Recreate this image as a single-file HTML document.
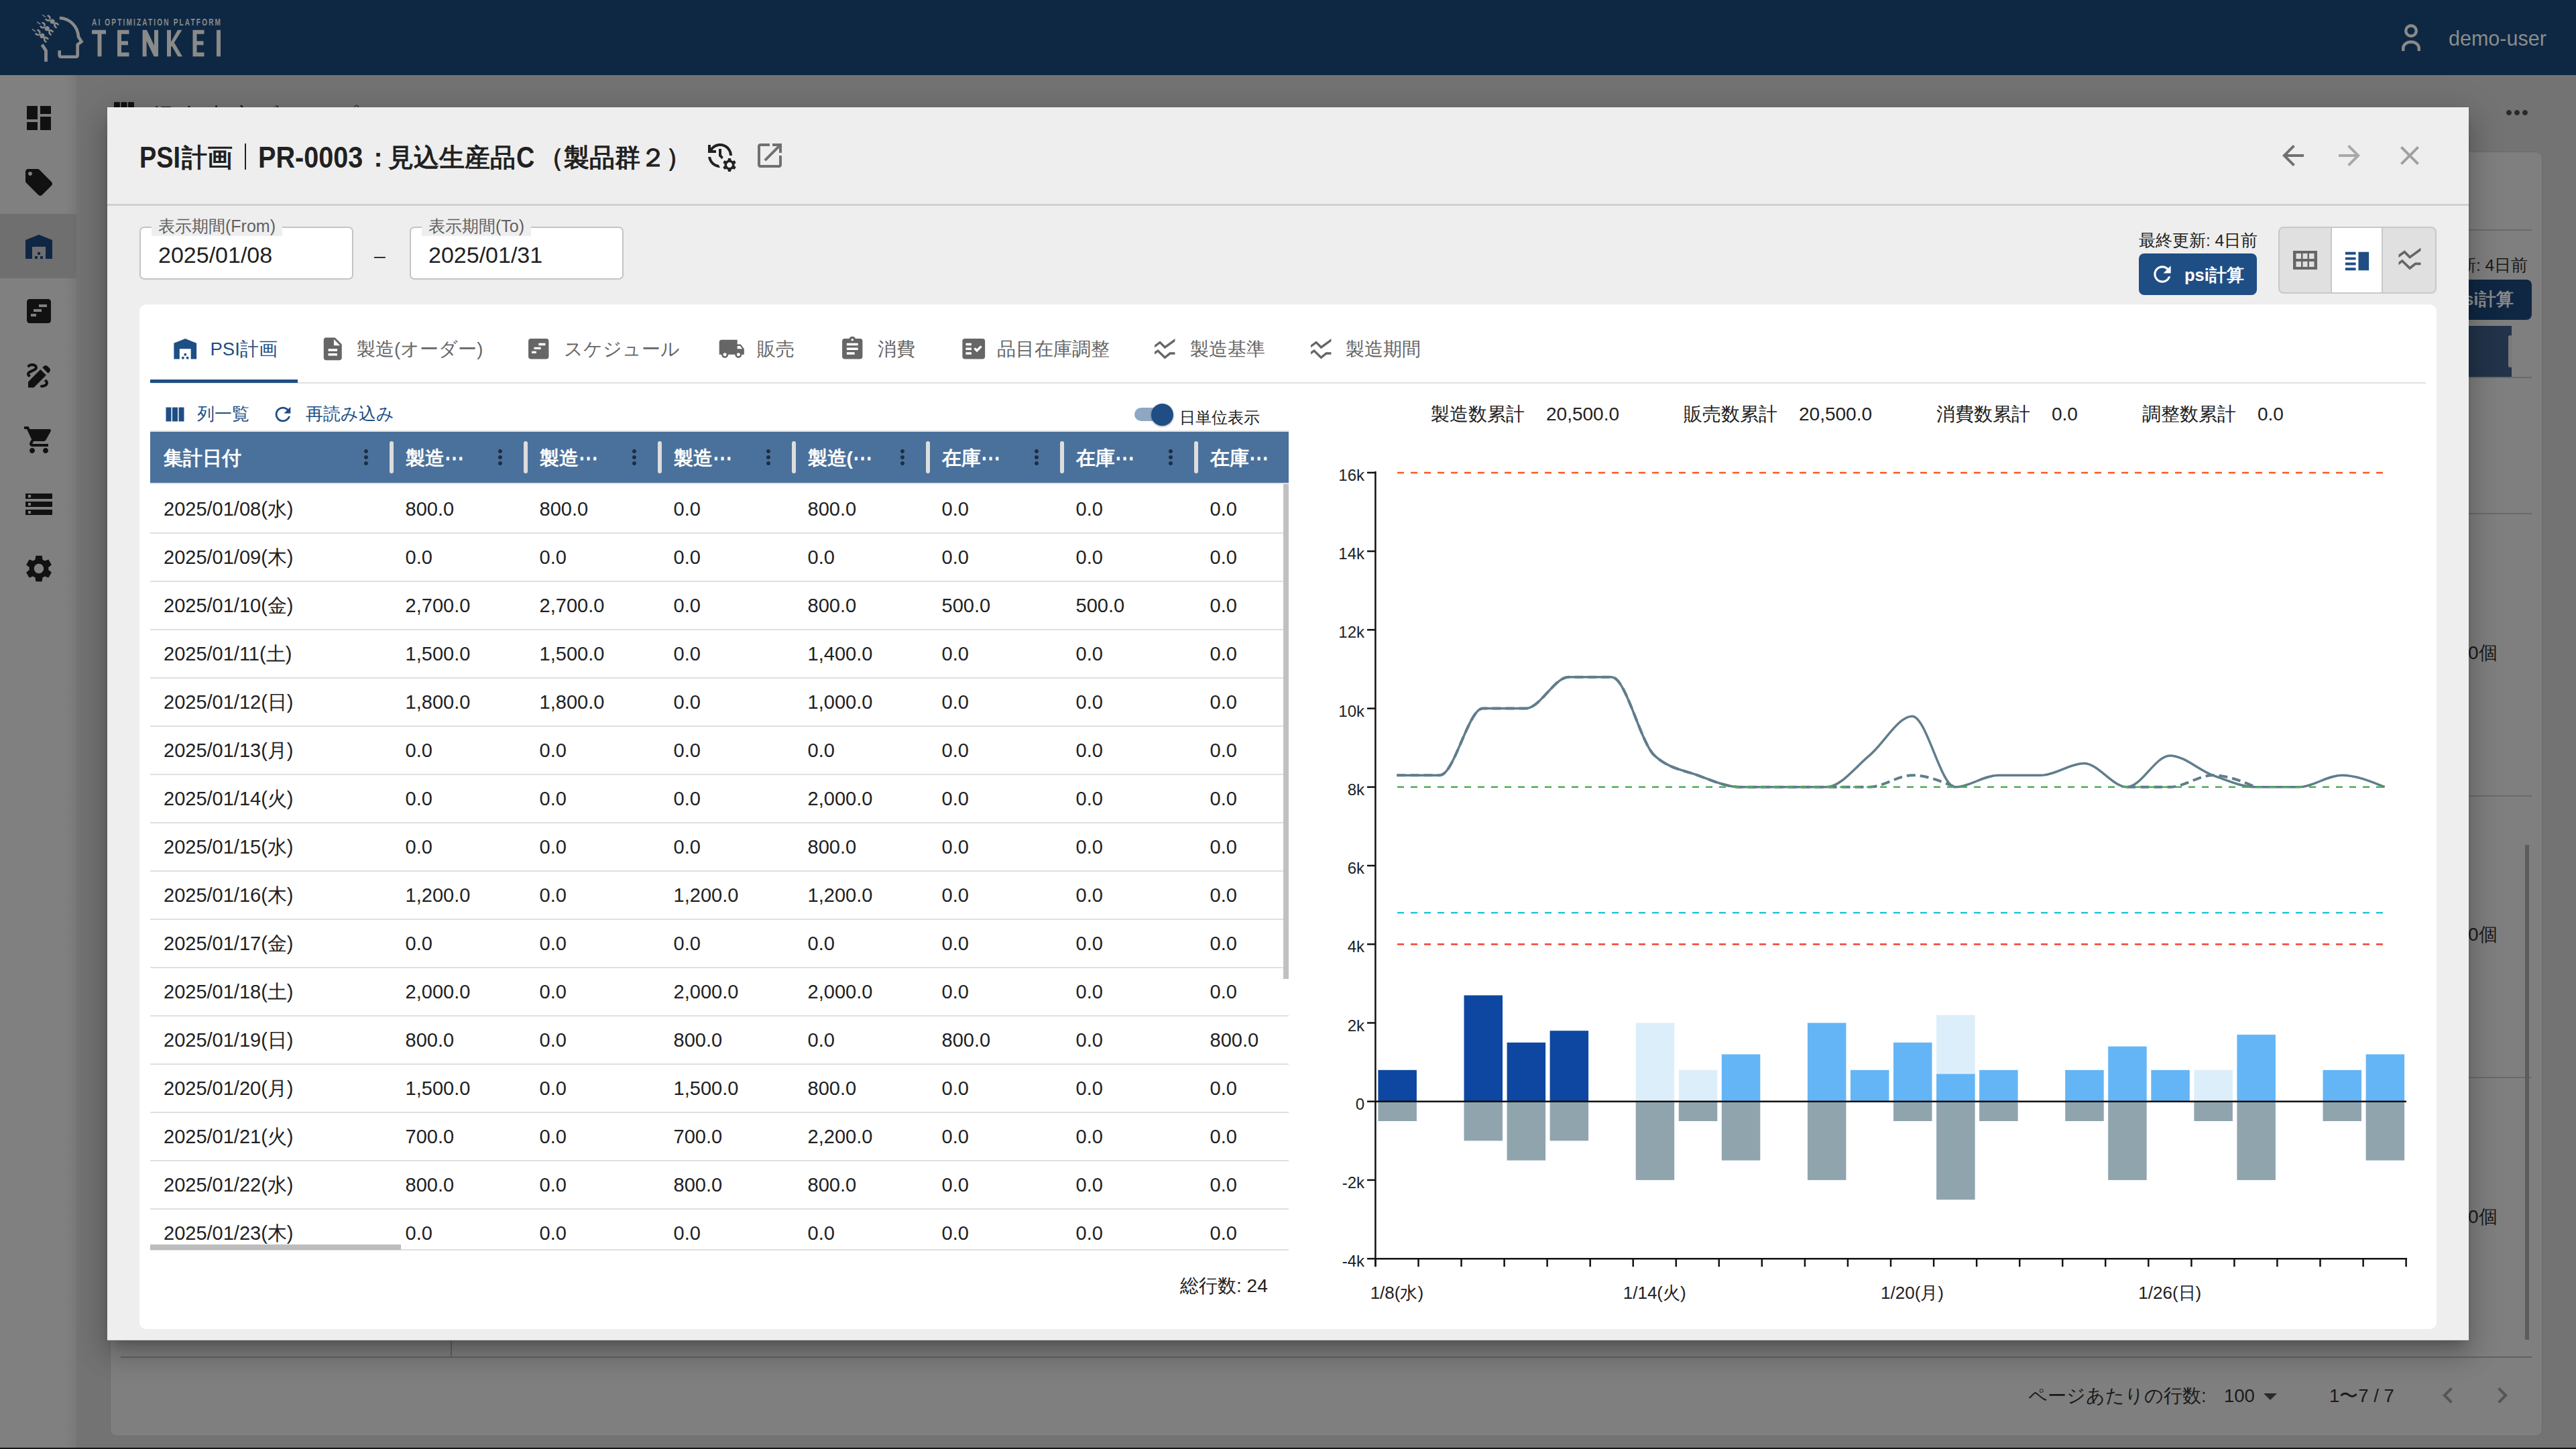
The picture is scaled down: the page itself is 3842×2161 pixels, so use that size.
<!DOCTYPE html><html><head><meta charset="utf-8"><style>
html,body{margin:0;padding:0;width:3842px;height:2161px;overflow:hidden;font-family:"Liberation Sans",sans-serif;}
*{box-sizing:border-box;}
</style></head><body>
<div style="position:relative;width:3842px;height:2161px;overflow:hidden;background:#737373">
<div style="position:absolute;left:0px;top:112px;width:114px;height:2049px;background:#808080"></div>
<div style="position:absolute;left:96px;top:112px;width:18px;height:2049px;background:linear-gradient(90deg,rgba(0,0,0,0),rgba(0,0,0,0.06))"></div>
<div style="position:absolute;left:0px;top:319px;width:114px;height:96px;background:#6f6f6f"></div>
<svg style="position:absolute;left:34px;top:152px;width:48px;height:48px" viewBox="0 0 24 24"><path fill="#111111" d="M3 13h8V3H3v10zm0 8h8v-6H3v6zm10 0h8V11h-8v10zm0-18v6h8V3h-8z"/></svg>
<svg style="position:absolute;left:34px;top:248px;width:48px;height:48px" viewBox="0 0 24 24"><path fill="#111111" d="M21.41 11.58l-9-9C12.05 2.22 11.55 2 11 2H4c-1.1 0-2 .9-2 2v7c0 .55.22 1.05.59 1.42l9 9c.36.36.86.58 1.41.58.55 0 1.05-.22 1.41-.59l7-7c.37-.36.59-.86.59-1.41 0-.55-.23-1.06-.59-1.42zM5.5 7C4.67 7 4 6.33 4 5.5S4.67 4 5.5 4 7 4.67 7 5.5 6.33 7 5.5 7z"/></svg>
<svg style="position:absolute;left:34px;top:344px;width:48px;height:48px" viewBox="0 0 24 24"><path fill="#0f2744" d="M22 21V7L12 3 2 7v14h5v-9h10v9h5zm-11-2H9v2h2v-2zm2-3h-2v2h2v-2zm2 3h-2v2h2v-2z"/></svg>
<svg style="position:absolute;left:34px;top:440px;width:48px;height:48px" viewBox="0 0 24 24"><path fill="#111111" d="M19 3H5c-1.1 0-2 .9-2 2v14c0 1.1.9 2 2 2h14c1.1 0 2-.9 2-2V5c0-1.1-.9-2-2-2zM10 16H6v-2h4v2zm4-3.5H8v-2h6v2zM18 9h-6V7h6v2z"/></svg>
<svg style="position:absolute;left:34px;top:536px;width:48px;height:48px" viewBox="0 0 24 24"><path fill="#111111" d="M18.85 10.39l1.06-1.06c.78-.78.78-2.05 0-2.83L18.5 5.09c-.78-.78-2.05-.78-2.83 0l-1.06 1.06 4.24 4.24zm-5.66-2.83L4 16.76V21h4.24l9.19-9.19-4.24-4.25zM19 17.5c0 2.19-2.540 3.5-5 3.5-.55 0-1-.45-1-1s.45-1 1-1c1.54 0 3-.73 3-1.5 0-.47-.48-.87-1.23-1.2l1.48-1.48c1.07.63 1.75 1.47 1.75 2.68zM4.58 13.35C3.61 12.79 3 12.06 3 11c0-1.8 1.89-2.63 3.56-3.36C7.59 7.18 9 6.56 9 6c0-.41-.78-1-2-1-1.26 0-1.8.61-1.83.64-.35.41-.98.46-1.4.12-.41-.34-.49-.95-.15-1.38C3.73 4.24 4.76 3 7 3s4 1.32 4 3c0 1.87-1.93 2.72-3.64 3.47C6.420 9.88 5 10.5 5 11c0 .31.43.6 1.07.86l-1.49 1.49z"/></svg>
<svg style="position:absolute;left:34px;top:632px;width:48px;height:48px" viewBox="0 0 24 24"><path fill="#111111" d="M7 18c-1.1 0-1.99.9-1.99 2S5.9 22 7 22s2-.9 2-2-.9-2-2-2zM1 2v2h2l3.6 7.59-1.35 2.45c-.16.28-.25.61-.25.96 0 1.1.9 2 2 2h12v-2H7.42c-.14 0-.25-.11-.25-.25l.03-.12.9-1.63h7.45c.75 0 1.41-.41 1.75-1.03l3.58-6.49c.08-.14.12-.31.12-.48 0-.55-.45-1-1-1H5.21l-.94-2H1zm16 16c-1.1 0-1.99.9-1.99 2s.89 2 1.99 2 2-.9 2-2-.9-2-2-2z"/></svg>
<svg style="position:absolute;left:34px;top:728px;width:48px;height:48px" viewBox="0 0 24 24"><path fill="#111111" d="M2 20h20v-4H2v4zm2-3h2v2H4v-2zM2 4v4h20V4H2zm4 3H4V5h2v2zm-4 7h20v-4H2v4zm2-3h2v2H4v-2z"/></svg>
<svg style="position:absolute;left:34px;top:824px;width:48px;height:48px" viewBox="0 0 24 24"><path fill="#111111" d="M19.14 12.94c.04-.3.06-.61.06-.94 0-.32-.02-.64-.07-.94l2.03-1.58c.18-.14.23-.41.12-.61l-1.92-3.32c-.12-.22-.37-.29-.59-.22l-2.39.96c-.5-.38-1.03-.7-1.62-.94l-.36-2.54c-.04-.24-.24-.41-.48-.41h-3.84c-.24 0-.43.17-.47.41l-.36 2.54c-.59.24-1.13.57-1.62.94l-2.39-.96c-.22-.08-.47 0-.59.22L2.74 8.87c-.12.21-.08.47.12.61l2.03 1.58c-.05.3-.09.63-.09.94s.02.64.07.94l-2.03 1.58c-.18.14-.23.41-.12.61l1.92 3.32c.12.22.37.29.59.22l2.39-.96c.5.38 1.030.7 1.62.94l.36 2.54c.05.24.24.41.48.41h3.84c.24 0 .44-.17.47-.41l.36-2.54c.59-.24 1.13-.56 1.62-.94l2.39.96c.22.08.47 0 .59-.22l1.92-3.32c.12-.22.07-.47-.12-.61l-2.01-1.58zM12 15.6c-1.98 0-3.6-1.62-3.6-3.6s1.62-3.6 3.6-3.6 3.6 1.620 3.6 3.6-1.62 3.6-3.6 3.6z"/></svg>
<div style="position:absolute;left:164px;top:226px;width:3628px;height:1916px;border:1.5px solid #6c6c6c;border-radius:10px;background:#7f7f7f"></div>
<div style="position:absolute;left:3680px;top:342px;width:96px;height:2px;background:#6a6a6a"></div>
<div style="position:absolute;left:3680px;top:562px;width:96px;height:2px;background:#6a6a6a"></div>
<div style="position:absolute;left:3680px;top:765px;width:96px;height:2px;background:#6a6a6a"></div>
<div style="position:absolute;left:3680px;top:1186px;width:96px;height:2px;background:#6a6a6a"></div>
<div style="position:absolute;left:3680px;top:1606px;width:96px;height:2px;background:#6a6a6a"></div>
<div style="position:absolute;left:180px;top:2023px;width:3596px;height:2px;background:#636363"></div>
<div style="position:absolute;left:672px;top:2000px;width:2px;height:24px;background:#636363"></div>
<div style="position:absolute;left:3593px;top:381.3px;font-size:24.5px;line-height:29.4px;color:#1a1a1a;font-weight:400;white-space:nowrap">最終更新: 4日前</div>
<div style="position:absolute;left:3600px;top:417px;width:176px;height:60px;background:#0f2743;border-radius:8px"></div>
<div style="position:absolute;left:3659px;top:431.4px;font-size:26px;line-height:31.2px;color:#8a8a8a;font-weight:700;white-space:nowrap">psi計算</div>
<div style="position:absolute;left:3682px;top:486px;width:64px;height:76px;background:#22334a"></div>
<div style="position:absolute;left:3741px;top:500px;width:6px;height:48px;border-radius:3px;background:#7a7a7a"></div>
<div style="position:absolute;left:3681px;top:957.2px;font-size:28px;line-height:33.6px;color:#1a1a1a;font-weight:400;white-space:nowrap">0個</div>
<div style="position:absolute;left:3681px;top:1377.2px;font-size:28px;line-height:33.6px;color:#1a1a1a;font-weight:400;white-space:nowrap">0個</div>
<div style="position:absolute;left:3681px;top:1798.2px;font-size:28px;line-height:33.6px;color:#1a1a1a;font-weight:400;white-space:nowrap">0個</div>
<div style="position:absolute;left:3766px;top:1260px;width:6px;height:738px;background:#5c5c5c"></div>
<svg style="position:absolute;left:3730px;top:144px;width:48px;height:48px" viewBox="0 0 24 24"><path fill="#2a2a2a" d="M6 10c-1.1 0-2 .9-2 2s.9 2 2 2 2-.9 2-2-.9-2-2-2zm12 0c-1.1 0-2 .9-2 2s.9 2 2 2 2-.9 2-2-.9-2-2-2zm-6 0c-1.1 0-2 .9-2 2s.9 2 2 2 2-.9 2-2-.9-2-2-2z"/></svg>
<div style="position:absolute;left:3025px;top:2064.5px;font-size:27.5px;line-height:33.0px;color:#1a1a1a;font-weight:400;white-space:nowrap">ページあたりの行数:</div>
<div style="position:absolute;left:3317px;top:2064.5px;font-size:27.5px;line-height:33.0px;color:#1a1a1a;font-weight:400;white-space:nowrap">100</div>
<svg style="position:absolute;left:3362px;top:2058px;width:48px;height:48px" viewBox="0 0 24 24"><path fill="#2a2a2a" d="M7 10l5 5 5-5z"/></svg>
<div style="position:absolute;left:3474px;top:2064.5px;font-size:27.5px;line-height:33.0px;color:#1a1a1a;font-weight:400;white-space:nowrap">1〜7 / 7</div>
<svg style="position:absolute;left:3627px;top:2057px;width:48px;height:48px" viewBox="0 0 24 24"><path fill="#555" d="M15.41 7.41L14 6l-6 6 6 6 1.41-1.41L10.83 12z"/></svg>
<svg style="position:absolute;left:3708px;top:2057px;width:48px;height:48px" viewBox="0 0 24 24"><path fill="#555" d="M10 6L8.59 7.41 13.17 12l-4.58 4.59L10 18l6-6z"/></svg>
<svg style="position:absolute;left:165px;top:144px;width:40px;height:40px" viewBox="0 0 24 24"><path fill="#111" d="M14.67 5v14H9.33V5h5.34zm1 14H21V5h-5.33v14zm-7.34 0V5H3v14h5.33z"/></svg>
<div style="position:absolute;left:229px;top:154.0px;font-size:30px;line-height:36.0px;color:#111;font-weight:400;white-space:nowrap;letter-spacing:9px">混合生産ブロープリ</div>
<div style="position:absolute;left:0px;top:2159px;width:3842px;height:2px;background:#151515"></div>
<div style="position:absolute;left:0px;top:0px;width:3842px;height:112px;background:#0e2843"></div>
<svg style="position:absolute;left:0;top:0;width:360px;height:112px" viewBox="0 0 360 112"><path d="M88.8 26.7 C104 27.5 116 39 117 55 L121.5 62 L115.7 66.6 V81.9 Q115.7 84.8 112.8 84.8 H91.5 Q88.7 84.8 88.7 81.9 V75.2" fill="none" stroke="#8a8a8a" stroke-width="4.6" stroke-linejoin="miter"/><path d="M62.6 66.6 L68.5 75.4 V91.9" fill="none" stroke="#8a8a8a" stroke-width="4.8"/><path d="M68.6 29.0 q2 2.5 5 1.2 M71.6 23.5 q3 1 3 4 M81.1 35.0 q3 -1.5 5.5 1.5 M81.6 35.5 q-1 3.5 2 5.5" fill="none" stroke="#8a8a8a" stroke-width="2.6" stroke-linecap="round"/><circle cx="78.1" cy="32.0" r="3.6" fill="#8a8a8a"/><path d="M63.099999999999994 22.0 l5 3.5" stroke="#8a8a8a" stroke-width="1.3"/><path d="M60.7 39.6 q2 2.5 5 1.2 M63.7 34.1 q3 1 3 4 M73.2 45.6 q3 -1.5 5.5 1.5 M73.7 46.1 q-1 3.5 2 5.5" fill="none" stroke="#8a8a8a" stroke-width="2.6" stroke-linecap="round"/><circle cx="70.2" cy="42.6" r="3.6" fill="#8a8a8a"/><path d="M55.2 32.6 l5 3.5" stroke="#8a8a8a" stroke-width="1.3"/><path d="M53.4 50.4 q2 2.5 5 1.2 M56.4 44.9 q3 1 3 4 M65.9 56.4 q3 -1.5 5.5 1.5 M66.4 56.9 q-1 3.5 2 5.5" fill="none" stroke="#8a8a8a" stroke-width="2.6" stroke-linecap="round"/><circle cx="62.9" cy="53.4" r="3.6" fill="#8a8a8a"/><path d="M47.9 43.4 l5 3.5" stroke="#8a8a8a" stroke-width="1.3"/><path d="M137 47.8 H158 M148.5 44.8 V84.2" fill="none" stroke="#8a8a8a" stroke-width="6" stroke-linejoin="miter"/><path d="M192.5 47.8 H178 V81.2 H192.5 M178 64.2 H191" fill="none" stroke="#8a8a8a" stroke-width="6" stroke-linejoin="miter"/><path d="M212.6 84.2 V44.8 H219 L230 68 V44.8 H236 V84.2 H229.6 L218.6 61 V84.2 Z" fill="#8a8a8a"/><path d="M249 44.8 H255 V62.5 L265 44.8 H271.5 L259.8 63.5 L272 84.2 H265.2 L256.3 68.5 L255 70.5 V84.2 H249 Z" fill="#8a8a8a"/><path d="M304.5 47.8 H290.5 V81.2 H304.5 M290.5 64.2 H303.5" fill="none" stroke="#8a8a8a" stroke-width="6" stroke-linejoin="miter"/><path d="M326 44.8 V84.2" fill="none" stroke="#8a8a8a" stroke-width="6" stroke-linejoin="miter"/><text x="190.28" y="38.2" transform="scale(0.72 1)" font-size="14" font-weight="700" fill="#8a8a8a" textLength="266.67" lengthAdjust="spacing" font-family="Liberation Sans, sans-serif">AI OPTIMIZATION PLATFORM</text></svg>
<svg style="position:absolute;left:3578px;top:32px;width:36px;height:48px" viewBox="0 0 36 48"><circle cx="18" cy="14" r="7.8" fill="none" stroke="#8a8a8a" stroke-width="4.4"/><path d="M6.25 44 V39.5 A11.75 9 0 0 1 29.75 39.5 V44" fill="none" stroke="#8a8a8a" stroke-width="4.4"/></svg>
<div style="position:absolute;left:3652px;top:38.7px;font-size:30.5px;line-height:36.6px;color:#8c8c8c;font-weight:400;white-space:nowrap">demo-user</div>
<div style="position:absolute;left:160px;top:160px;width:3522px;height:1839px;background:#eeeeee;border-bottom:1.5px solid #d2d2d2;box-shadow:0 11px 15px -7px rgba(0,0,0,0.2),0 24px 38px 3px rgba(0,0,0,0.14),0 9px 46px 8px rgba(0,0,0,0.12)"></div>
<div style="position:absolute;left:208px;top:209.1px;font-size:44px;line-height:52.8px;color:#212121;font-weight:700;white-space:nowrap;transform:scaleX(0.86);transform-origin:0 50%">PSI</div>
<div style="position:absolute;left:271px;top:211.5px;font-size:38.3px;line-height:46.0px;color:#212121;font-weight:700;white-space:nowrap">計画</div>
<div style="position:absolute;left:364.5px;top:214px;width:2.5px;height:38.5px;background:#212121"></div>
<div style="position:absolute;left:385px;top:209.1px;font-size:44px;line-height:52.8px;color:#212121;font-weight:700;white-space:nowrap;transform:scaleX(0.9);transform-origin:0 50%">PR-0003</div>
<div style="position:absolute;left:545px;top:211.5px;font-size:38.3px;line-height:46.0px;color:#212121;font-weight:700;white-space:nowrap">：</div>
<div style="position:absolute;left:579px;top:211.5px;font-size:38.3px;line-height:46.0px;color:#212121;font-weight:700;white-space:nowrap">見込生産品</div>
<div style="position:absolute;left:770px;top:209.1px;font-size:44px;line-height:52.8px;color:#212121;font-weight:700;white-space:nowrap;transform:scaleX(0.86);transform-origin:0 50%">C</div>
<div style="position:absolute;left:803px;top:211.5px;font-size:38.3px;line-height:46.0px;color:#212121;font-weight:700;white-space:nowrap">（製品群２）</div>
<svg style="position:absolute;left:1050px;top:208px;width:48px;height:48px" viewBox="0 0 24 24"><path fill="#212121" d="M11 7v5.41l2.36 2.36 1.04-1.79-1.4-1.39V7h-2zm10 5c0-4.97-4.03-9-9-9-2.83 0-5.35 1.32-7 3.36V4H3v6h6V8H6.26C7.53 6.19 9.63 5 12 5c3.86 0 7 3.14 7 7h2zm-10.14 6.91c-2.99-.49-5.35-2.9-5.78-5.91H3.06c.5 4.5 4.31 8 8.94 8h.07l-1.21-2.09zM22.69 18.37l1.14-1-1-1.73-1.45.49c-.32-.27-.68-.48-1.08-.63L20 14h-2l-.3 1.49c-.4.15-.76.36-1.08.63l-1.45-.49-1 1.73 1.14 1c-.08.5-.08.76 0 1.26l-1.14 1 1 1.73 1.45-.49c.32.27.68.48 1.08.63L18 24h2l.3-1.49c.4-.15.76-.36 1.08-.63l1.45.49 1-1.73-1.14-1c.08-.51.08-.77 0-1.27zM19 21c-1.1 0-2-.9-2-2s.9-2 2-2 2 .9 2 2-.9 2-2 2z"/></svg>
<svg style="position:absolute;left:1124px;top:208px;width:48px;height:48px" viewBox="0 0 24 24"><path fill="#707070" d="M19 19H5V5h7V3H5c-1.11 0-2 .9-2 2v14c0 1.1.89 2 2 2h14c1.1 0 2-.9 2-2v-7h-2v7zM14 3v2h3.59l-9.83 9.83 1.41 1.41L19 6.41V10h2V3h-7z"/></svg>
<svg style="position:absolute;left:3396px;top:208px;width:48px;height:48px" viewBox="0 0 24 24"><path fill="#707070" d="M20 11H7.83l5.59-5.59L12 4l-8 8 8 8 1.41-1.41L7.83 13H20v-2z"/></svg>
<svg style="position:absolute;left:3480px;top:208px;width:48px;height:48px" viewBox="0 0 24 24"><path fill="#a8a8a8" d="M12 4l-1.41 1.41L16.17 11H4v2h12.17l-5.58 5.59L12 20l8-8z"/></svg>
<svg style="position:absolute;left:3570px;top:208px;width:48px;height:48px" viewBox="0 0 24 24"><path fill="#a0a0a0" d="M19 6.41L17.59 5 12 10.59 6.41 5 5 6.41 10.59 12 5 17.59 6.41 19 12 13.41 17.59 19 19 17.59 13.41 12z"/></svg>
<div style="position:absolute;left:160px;top:304px;width:3522px;height:3px;background:#d0d0d0"></div>
<div style="position:absolute;left:208px;top:338px;width:319px;height:79px;background:#fff;border:2px solid #c4c4c4;border-radius:7px"></div><div style="position:absolute;left:226px;top:322px;height:30px;padding:0 10px;background:#eeeeee;font-size:25px;line-height:30px;color:#616161;white-space:nowrap">表示期間(From)</div><div style="position:absolute;left:236px;top:359.6px;font-size:34px;line-height:40.8px;color:#212121;font-weight:400;white-space:nowrap">2025/01/08</div>
<div style="position:absolute;left:611px;top:338px;width:319px;height:79px;background:#fff;border:2px solid #c4c4c4;border-radius:7px"></div><div style="position:absolute;left:629px;top:322px;height:30px;padding:0 10px;background:#eeeeee;font-size:25px;line-height:30px;color:#616161;white-space:nowrap">表示期間(To)</div><div style="position:absolute;left:639px;top:359.6px;font-size:34px;line-height:40.8px;color:#212121;font-weight:400;white-space:nowrap">2025/01/31</div>
<div style="position:absolute;left:558px;top:364.0px;font-size:30px;line-height:36.0px;color:#333;font-weight:400;white-space:nowrap">–</div>
<div style="position:absolute;left:3190px;top:343.8px;font-size:24.5px;line-height:29.4px;color:#212121;font-weight:400;white-space:nowrap">最終更新: 4日前</div>
<div style="position:absolute;left:3190px;top:378px;width:176px;height:62px;background:#1f4e85;border-radius:8px"></div>
<svg style="position:absolute;left:3206px;top:390px;width:38px;height:38px" viewBox="0 0 24 24"><path fill="#ffffff" d="M17.65 6.35C16.2 4.9 14.21 4 12 4c-4.42 0-7.99 3.58-7.99 8s3.57 8 7.99 8c3.73 0 6.84-2.55 7.73-6h-2.08c-.82 2.33-3.04 4-5.65 4-3.31 0-6-2.690-6-6s2.69-6 6-6c1.66 0 3.14.69 4.22 1.78L13 11h7V4l-2.35 2.35z"/></svg>
<div style="position:absolute;left:3258px;top:394.7px;font-size:25.5px;line-height:30.6px;color:#ffffff;font-weight:700;white-space:nowrap">psi計算</div>
<div style="position:absolute;left:3398px;top:338px;width:236px;height:100px;background:#e0e0e0;border:2px solid #c8c8c8;border-radius:8px;overflow:hidden"><div style="position:absolute;left:76px;top:0;width:78px;height:96px;background:#fff;border-left:2px solid #c8c8c8;border-right:2px solid #c8c8c8"></div></div>
<svg style="position:absolute;left:3420px;top:374px;width:36px;height:28px" viewBox="0 0 36 28"><path fill="#666" fill-rule="evenodd" d="M0 0H36V28H0Z M4.5 4H12V12H4.5Z M14.5 4H21.5V12H14.5Z M24 4H31.5V12H24Z M4.5 16H12V24H4.5Z M14.5 16H21.5V24H14.5Z M24 16H31.5V24H24Z"/></svg>
<svg style="position:absolute;left:3491.5px;top:365.5px;width:47px;height:47px" viewBox="0 0 24 24"><path fill="#1f4e85" d="M3 15h8v-2H3v2zm0 4h8v-2H3v2zm0-8h8V9H3v2zm0-6v2h8V5H3zm10 0h8v14h-8V5z"/></svg>
<svg style="position:absolute;left:3572px;top:364px;width:44px;height:44px" viewBox="0 0 24 24"><path fill="#666666" d="M21 5.47L12 12 7.62 7.62 3 11V8.52L7.83 5l4.38 4.38L21 3v2.47zM21 15h-4.7l-4.17 3.34L6 12.41l-3 2.13V17l2.8-2 6.2 6 5-4h4v-2z"/></svg>
<div style="position:absolute;left:208px;top:454px;width:3426px;height:1528px;background:#fff;border-radius:10px"></div>
<svg style="position:absolute;left:256.3px;top:500px;width:40.5px;height:40.5px" viewBox="0 0 24 24"><path fill="#1f4e85" d="M22 21V7L12 3 2 7v14h5v-9h10v9h5zm-11-2H9v2h2v-2zm2-3h-2v2h2v-2zm2 3h-2v2h2v-2z"/></svg>
<div style="position:absolute;left:313.5px;top:503.5px;font-size:27.5px;line-height:33.0px;color:#1f4e85;font-weight:400;white-space:nowrap">PSI計画</div>
<svg style="position:absolute;left:476px;top:500px;width:40.5px;height:40.5px" viewBox="0 0 24 24"><path fill="#666666" d="M14 2H6c-1.1 0-1.99.9-1.99 2L4 20c0 1.1.89 2 1.99 2H18c1.1 0 2-.9 2-2V8l-6-6zm2 16H8v-2h8v2zm0-4H8v-2h8v2zm-3-5V3.5L18.5 9H13z"/></svg>
<div style="position:absolute;left:532px;top:503.5px;font-size:27.5px;line-height:33.0px;color:#666666;font-weight:400;white-space:nowrap">製造(オーダー)</div>
<svg style="position:absolute;left:783px;top:500px;width:40.5px;height:40.5px" viewBox="0 0 24 24"><path fill="#666666" d="M19 3H5c-1.1 0-2 .9-2 2v14c0 1.1.9 2 2 2h14c1.1 0 2-.9 2-2V5c0-1.1-.9-2-2-2zM10 16H6v-2h4v2zm4-3.5H8v-2h6v2zM18 9h-6V7h6v2z"/></svg>
<div style="position:absolute;left:841px;top:503.5px;font-size:27.5px;line-height:33.0px;color:#666666;font-weight:400;white-space:nowrap">スケジュール</div>
<svg style="position:absolute;left:1071px;top:500px;width:40.5px;height:40.5px" viewBox="0 0 24 24"><path fill="#666666" d="M20 8h-3V4H3c-1.1 0-2 .9-2 2v11h2c0 1.66 1.34 3 3 3s3-1.34 3-3h6c0 1.66 1.34 3 3 3s3-1.34 3-3h2v-5l-3-4zM6 18.5c-.83 0-1.5-.67-1.5-1.5s.67-1.5 1.5-1.5 1.5.67 1.5 1.5-.67 1.5-1.5 1.5zm13.5-9l1.96 2.5H17V9.5h2.5zm-1.5 9c-.83 0-1.5-.67-1.5-1.5s.67-1.5 1.5-1.5 1.5.67 1.5 1.5-.67 1.5-1.5 1.5z"/></svg>
<div style="position:absolute;left:1128.7px;top:503.5px;font-size:27.5px;line-height:33.0px;color:#666666;font-weight:400;white-space:nowrap">販売</div>
<svg style="position:absolute;left:1251px;top:500px;width:40.5px;height:40.5px" viewBox="0 0 24 24"><path fill="#666666" d="M19 3h-4.18C14.4 1.84 13.3 1 12 1c-1.3 0-2.4.84-2.82 2H5c-1.1 0-2 .9-2 2v14c0 1.1.9 2 2 2h14c1.1 0 2-.9 2-2V5c0-1.1-.9-2-2-2zm-7 0c.55 0 1 .45 1 1s-.45 1-1 1-1-.45-1-1 .45-1 1-1zm2 14H7v-2h7v2zm3-4H7v-2h10v2zm0-4H7V7h10v2z"/></svg>
<div style="position:absolute;left:1309px;top:503.5px;font-size:27.5px;line-height:33.0px;color:#666666;font-weight:400;white-space:nowrap">消費</div>
<svg style="position:absolute;left:1432px;top:500px;width:40.5px;height:40.5px" viewBox="0 0 24 24"><path fill="#666666" d="M20 3H4c-1.1 0-2 .9-2 2v14c0 1.1.9 2 2 2h16c1.1 0 2-.9 2-2V5c0-1.1-.9-2-2-2zM10 17H5v-2h5v2zm0-4H5v-2h5v2zm0-4H5V7h5v2zm4.82 6L12 12.16l1.41-1.41 1.41 1.42L17.99 9l1.42 1.42L14.82 15z"/></svg>
<div style="position:absolute;left:1487px;top:503.5px;font-size:27.5px;line-height:33.0px;color:#666666;font-weight:400;white-space:nowrap">品目在庫調整</div>
<svg style="position:absolute;left:1717px;top:500px;width:40.5px;height:40.5px" viewBox="0 0 24 24"><path fill="#666666" d="M21 5.47L12 12 7.62 7.62 3 11V8.52L7.83 5l4.38 4.38L21 3v2.47zM21 15h-4.7l-4.17 3.34L6 12.41l-3 2.13V17l2.8-2 6.2 6 5-4h4v-2z"/></svg>
<div style="position:absolute;left:1775px;top:503.5px;font-size:27.5px;line-height:33.0px;color:#666666;font-weight:400;white-space:nowrap">製造基準</div>
<svg style="position:absolute;left:1950px;top:500px;width:40.5px;height:40.5px" viewBox="0 0 24 24"><path fill="#666666" d="M21 5.47L12 12 7.62 7.62 3 11V8.52L7.83 5l4.38 4.38L21 3v2.47zM21 15h-4.7l-4.17 3.34L6 12.41l-3 2.13V17l2.8-2 6.2 6 5-4h4v-2z"/></svg>
<div style="position:absolute;left:2007px;top:503.5px;font-size:27.5px;line-height:33.0px;color:#666666;font-weight:400;white-space:nowrap">製造期間</div>
<div style="position:absolute;left:224px;top:570px;width:3394px;height:2px;background:#e0e0e0"></div>
<div style="position:absolute;left:224px;top:566px;width:220px;height:5px;background:#1f4e85"></div>
<svg style="position:absolute;left:242.5px;top:600px;width:36px;height:36px" viewBox="0 0 24 24"><path fill="#1f4e85" d="M14.67 5v14H9.33V5h5.34zm1 14H21V5h-5.33v14zm-7.34 0V5H3v14h5.33z"/></svg>
<div style="position:absolute;left:294px;top:602.4px;font-size:26px;line-height:31.2px;color:#1f4e85;font-weight:400;white-space:nowrap">列一覧</div>
<svg style="position:absolute;left:404.5px;top:600.5px;width:34px;height:34px" viewBox="0 0 24 24"><path fill="#1f4e85" d="M17.65 6.35C16.2 4.9 14.21 4 12 4c-4.42 0-7.99 3.58-7.99 8s3.57 8 7.99 8c3.73 0 6.84-2.55 7.73-6h-2.08c-.82 2.33-3.04 4-5.65 4-3.31 0-6-2.690-6-6s2.69-6 6-6c1.66 0 3.14.69 4.22 1.78L13 11h7V4l-2.35 2.35z"/></svg>
<div style="position:absolute;left:456px;top:602.4px;font-size:26px;line-height:31.2px;color:#1f4e85;font-weight:400;white-space:nowrap">再読み込み</div>
<div style="position:absolute;left:1692px;top:608px;width:52px;height:20px;border-radius:10px;background:#8fa7c2"></div>
<div style="position:absolute;left:1717px;top:602px;width:33px;height:33px;border-radius:50%;background:#1f4e85;box-shadow:0 1px 3px rgba(0,0,0,0.4)"></div>
<div style="position:absolute;left:1759px;top:608.6px;font-size:24px;line-height:28.8px;color:#212121;font-weight:400;white-space:nowrap">日単位表示</div>
<div style="position:absolute;left:224px;top:644px;width:1698px;height:78px;background:#4a719b"></div>
<div style="position:absolute;left:224px;top:720px;width:1698px;height:2px;background:#e0e0e0"></div>
<div style="position:absolute;left:224px;top:642px;width:1698px;height:2px;background:#e0e0e0"></div>
<div style="position:absolute;left:244px;top:665.9px;font-size:28.5px;line-height:34.2px;color:#ffffff;font-weight:700;white-space:nowrap">集計日付</div>
<svg style="position:absolute;left:528px;top:664px;width:36px;height:36px" viewBox="0 0 24 24"><path fill="#1e2d40" d="M12 8c1.1 0 2-.9 2-2s-.9-2-2-2-2 .9-2 2 .9 2 2 2zm0 2c-1.1 0-2 .9-2 2s.9 2 2 2 2-.9 2-2-.9-2-2-2zm0 6c-1.1 0-2 .9-2 2s.9 2 2 2 2-.9 2-2-.9-2-2-2z"/></svg>
<div style="position:absolute;left:581px;top:658px;width:6px;height:48px;border-radius:3px;background:#dddddd"></div>
<div style="position:absolute;left:604.6px;top:665.9px;font-size:28.5px;line-height:34.2px;color:#ffffff;font-weight:700;white-space:nowrap">製造⋯</div>
<svg style="position:absolute;left:728px;top:664px;width:36px;height:36px" viewBox="0 0 24 24"><path fill="#1e2d40" d="M12 8c1.1 0 2-.9 2-2s-.9-2-2-2-2 .9-2 2 .9 2 2 2zm0 2c-1.1 0-2 .9-2 2s.9 2 2 2 2-.9 2-2-.9-2-2-2zm0 6c-1.1 0-2 .9-2 2s.9 2 2 2 2-.9 2-2-.9-2-2-2z"/></svg>
<div style="position:absolute;left:781px;top:658px;width:6px;height:48px;border-radius:3px;background:#dddddd"></div>
<div style="position:absolute;left:804.6px;top:665.9px;font-size:28.5px;line-height:34.2px;color:#ffffff;font-weight:700;white-space:nowrap">製造⋯</div>
<svg style="position:absolute;left:928px;top:664px;width:36px;height:36px" viewBox="0 0 24 24"><path fill="#1e2d40" d="M12 8c1.1 0 2-.9 2-2s-.9-2-2-2-2 .9-2 2 .9 2 2 2zm0 2c-1.1 0-2 .9-2 2s.9 2 2 2 2-.9 2-2-.9-2-2-2zm0 6c-1.1 0-2 .9-2 2s.9 2 2 2 2-.9 2-2-.9-2-2-2z"/></svg>
<div style="position:absolute;left:981px;top:658px;width:6px;height:48px;border-radius:3px;background:#dddddd"></div>
<div style="position:absolute;left:1004.6px;top:665.9px;font-size:28.5px;line-height:34.2px;color:#ffffff;font-weight:700;white-space:nowrap">製造⋯</div>
<svg style="position:absolute;left:1128px;top:664px;width:36px;height:36px" viewBox="0 0 24 24"><path fill="#1e2d40" d="M12 8c1.1 0 2-.9 2-2s-.9-2-2-2-2 .9-2 2 .9 2 2 2zm0 2c-1.1 0-2 .9-2 2s.9 2 2 2 2-.9 2-2-.9-2-2-2zm0 6c-1.1 0-2 .9-2 2s.9 2 2 2 2-.9 2-2-.9-2-2-2z"/></svg>
<div style="position:absolute;left:1181px;top:658px;width:6px;height:48px;border-radius:3px;background:#dddddd"></div>
<div style="position:absolute;left:1204.6px;top:665.9px;font-size:28.5px;line-height:34.2px;color:#ffffff;font-weight:700;white-space:nowrap">製造(⋯</div>
<svg style="position:absolute;left:1328px;top:664px;width:36px;height:36px" viewBox="0 0 24 24"><path fill="#1e2d40" d="M12 8c1.1 0 2-.9 2-2s-.9-2-2-2-2 .9-2 2 .9 2 2 2zm0 2c-1.1 0-2 .9-2 2s.9 2 2 2 2-.9 2-2-.9-2-2-2zm0 6c-1.1 0-2 .9-2 2s.9 2 2 2 2-.9 2-2-.9-2-2-2z"/></svg>
<div style="position:absolute;left:1381px;top:658px;width:6px;height:48px;border-radius:3px;background:#dddddd"></div>
<div style="position:absolute;left:1404.6px;top:665.9px;font-size:28.5px;line-height:34.2px;color:#ffffff;font-weight:700;white-space:nowrap">在庫⋯</div>
<svg style="position:absolute;left:1528px;top:664px;width:36px;height:36px" viewBox="0 0 24 24"><path fill="#1e2d40" d="M12 8c1.1 0 2-.9 2-2s-.9-2-2-2-2 .9-2 2 .9 2 2 2zm0 2c-1.1 0-2 .9-2 2s.9 2 2 2 2-.9 2-2-.9-2-2-2zm0 6c-1.1 0-2 .9-2 2s.9 2 2 2 2-.9 2-2-.9-2-2-2z"/></svg>
<div style="position:absolute;left:1581px;top:658px;width:6px;height:48px;border-radius:3px;background:#dddddd"></div>
<div style="position:absolute;left:1604.6px;top:665.9px;font-size:28.5px;line-height:34.2px;color:#ffffff;font-weight:700;white-space:nowrap">在庫⋯</div>
<svg style="position:absolute;left:1728px;top:664px;width:36px;height:36px" viewBox="0 0 24 24"><path fill="#1e2d40" d="M12 8c1.1 0 2-.9 2-2s-.9-2-2-2-2 .9-2 2 .9 2 2 2zm0 2c-1.1 0-2 .9-2 2s.9 2 2 2 2-.9 2-2-.9-2-2-2zm0 6c-1.1 0-2 .9-2 2s.9 2 2 2 2-.9 2-2-.9-2-2-2z"/></svg>
<div style="position:absolute;left:1781px;top:658px;width:6px;height:48px;border-radius:3px;background:#dddddd"></div>
<div style="position:absolute;left:1804.6px;top:665.9px;font-size:28.5px;line-height:34.2px;color:#ffffff;font-weight:700;white-space:nowrap">在庫⋯</div>
<div style="position:absolute;left:224px;top:724px;width:1698px;height:1141px;overflow:hidden">
<div style="position:absolute;left:0;top:0px;width:1698px;height:72px;border-bottom:2px solid #e0e0e0"></div>
<div style="position:absolute;left:20px;top:17.6px;font-size:29px;line-height:34.8px;color:#212121;font-weight:400;white-space:nowrap">2025/01/08(水)</div>
<div style="position:absolute;left:380.6px;top:17.6px;font-size:29px;line-height:34.8px;color:#212121;font-weight:400;white-space:nowrap">800.0</div>
<div style="position:absolute;left:580.6px;top:17.6px;font-size:29px;line-height:34.8px;color:#212121;font-weight:400;white-space:nowrap">800.0</div>
<div style="position:absolute;left:780.6px;top:17.6px;font-size:29px;line-height:34.8px;color:#212121;font-weight:400;white-space:nowrap">0.0</div>
<div style="position:absolute;left:980.5999999999999px;top:17.6px;font-size:29px;line-height:34.8px;color:#212121;font-weight:400;white-space:nowrap">800.0</div>
<div style="position:absolute;left:1180.6px;top:17.6px;font-size:29px;line-height:34.8px;color:#212121;font-weight:400;white-space:nowrap">0.0</div>
<div style="position:absolute;left:1380.6px;top:17.6px;font-size:29px;line-height:34.8px;color:#212121;font-weight:400;white-space:nowrap">0.0</div>
<div style="position:absolute;left:1580.6px;top:17.6px;font-size:29px;line-height:34.8px;color:#212121;font-weight:400;white-space:nowrap">0.0</div>
<div style="position:absolute;left:0;top:72px;width:1698px;height:72px;border-bottom:2px solid #e0e0e0"></div>
<div style="position:absolute;left:20px;top:89.6px;font-size:29px;line-height:34.8px;color:#212121;font-weight:400;white-space:nowrap">2025/01/09(木)</div>
<div style="position:absolute;left:380.6px;top:89.6px;font-size:29px;line-height:34.8px;color:#212121;font-weight:400;white-space:nowrap">0.0</div>
<div style="position:absolute;left:580.6px;top:89.6px;font-size:29px;line-height:34.8px;color:#212121;font-weight:400;white-space:nowrap">0.0</div>
<div style="position:absolute;left:780.6px;top:89.6px;font-size:29px;line-height:34.8px;color:#212121;font-weight:400;white-space:nowrap">0.0</div>
<div style="position:absolute;left:980.5999999999999px;top:89.6px;font-size:29px;line-height:34.8px;color:#212121;font-weight:400;white-space:nowrap">0.0</div>
<div style="position:absolute;left:1180.6px;top:89.6px;font-size:29px;line-height:34.8px;color:#212121;font-weight:400;white-space:nowrap">0.0</div>
<div style="position:absolute;left:1380.6px;top:89.6px;font-size:29px;line-height:34.8px;color:#212121;font-weight:400;white-space:nowrap">0.0</div>
<div style="position:absolute;left:1580.6px;top:89.6px;font-size:29px;line-height:34.8px;color:#212121;font-weight:400;white-space:nowrap">0.0</div>
<div style="position:absolute;left:0;top:144px;width:1698px;height:72px;border-bottom:2px solid #e0e0e0"></div>
<div style="position:absolute;left:20px;top:161.6px;font-size:29px;line-height:34.8px;color:#212121;font-weight:400;white-space:nowrap">2025/01/10(金)</div>
<div style="position:absolute;left:380.6px;top:161.6px;font-size:29px;line-height:34.8px;color:#212121;font-weight:400;white-space:nowrap">2,700.0</div>
<div style="position:absolute;left:580.6px;top:161.6px;font-size:29px;line-height:34.8px;color:#212121;font-weight:400;white-space:nowrap">2,700.0</div>
<div style="position:absolute;left:780.6px;top:161.6px;font-size:29px;line-height:34.8px;color:#212121;font-weight:400;white-space:nowrap">0.0</div>
<div style="position:absolute;left:980.5999999999999px;top:161.6px;font-size:29px;line-height:34.8px;color:#212121;font-weight:400;white-space:nowrap">800.0</div>
<div style="position:absolute;left:1180.6px;top:161.6px;font-size:29px;line-height:34.8px;color:#212121;font-weight:400;white-space:nowrap">500.0</div>
<div style="position:absolute;left:1380.6px;top:161.6px;font-size:29px;line-height:34.8px;color:#212121;font-weight:400;white-space:nowrap">500.0</div>
<div style="position:absolute;left:1580.6px;top:161.6px;font-size:29px;line-height:34.8px;color:#212121;font-weight:400;white-space:nowrap">0.0</div>
<div style="position:absolute;left:0;top:216px;width:1698px;height:72px;border-bottom:2px solid #e0e0e0"></div>
<div style="position:absolute;left:20px;top:233.6px;font-size:29px;line-height:34.8px;color:#212121;font-weight:400;white-space:nowrap">2025/01/11(土)</div>
<div style="position:absolute;left:380.6px;top:233.6px;font-size:29px;line-height:34.8px;color:#212121;font-weight:400;white-space:nowrap">1,500.0</div>
<div style="position:absolute;left:580.6px;top:233.6px;font-size:29px;line-height:34.8px;color:#212121;font-weight:400;white-space:nowrap">1,500.0</div>
<div style="position:absolute;left:780.6px;top:233.6px;font-size:29px;line-height:34.8px;color:#212121;font-weight:400;white-space:nowrap">0.0</div>
<div style="position:absolute;left:980.5999999999999px;top:233.6px;font-size:29px;line-height:34.8px;color:#212121;font-weight:400;white-space:nowrap">1,400.0</div>
<div style="position:absolute;left:1180.6px;top:233.6px;font-size:29px;line-height:34.8px;color:#212121;font-weight:400;white-space:nowrap">0.0</div>
<div style="position:absolute;left:1380.6px;top:233.6px;font-size:29px;line-height:34.8px;color:#212121;font-weight:400;white-space:nowrap">0.0</div>
<div style="position:absolute;left:1580.6px;top:233.6px;font-size:29px;line-height:34.8px;color:#212121;font-weight:400;white-space:nowrap">0.0</div>
<div style="position:absolute;left:0;top:288px;width:1698px;height:72px;border-bottom:2px solid #e0e0e0"></div>
<div style="position:absolute;left:20px;top:305.6px;font-size:29px;line-height:34.8px;color:#212121;font-weight:400;white-space:nowrap">2025/01/12(日)</div>
<div style="position:absolute;left:380.6px;top:305.6px;font-size:29px;line-height:34.8px;color:#212121;font-weight:400;white-space:nowrap">1,800.0</div>
<div style="position:absolute;left:580.6px;top:305.6px;font-size:29px;line-height:34.8px;color:#212121;font-weight:400;white-space:nowrap">1,800.0</div>
<div style="position:absolute;left:780.6px;top:305.6px;font-size:29px;line-height:34.8px;color:#212121;font-weight:400;white-space:nowrap">0.0</div>
<div style="position:absolute;left:980.5999999999999px;top:305.6px;font-size:29px;line-height:34.8px;color:#212121;font-weight:400;white-space:nowrap">1,000.0</div>
<div style="position:absolute;left:1180.6px;top:305.6px;font-size:29px;line-height:34.8px;color:#212121;font-weight:400;white-space:nowrap">0.0</div>
<div style="position:absolute;left:1380.6px;top:305.6px;font-size:29px;line-height:34.8px;color:#212121;font-weight:400;white-space:nowrap">0.0</div>
<div style="position:absolute;left:1580.6px;top:305.6px;font-size:29px;line-height:34.8px;color:#212121;font-weight:400;white-space:nowrap">0.0</div>
<div style="position:absolute;left:0;top:360px;width:1698px;height:72px;border-bottom:2px solid #e0e0e0"></div>
<div style="position:absolute;left:20px;top:377.6px;font-size:29px;line-height:34.8px;color:#212121;font-weight:400;white-space:nowrap">2025/01/13(月)</div>
<div style="position:absolute;left:380.6px;top:377.6px;font-size:29px;line-height:34.8px;color:#212121;font-weight:400;white-space:nowrap">0.0</div>
<div style="position:absolute;left:580.6px;top:377.6px;font-size:29px;line-height:34.8px;color:#212121;font-weight:400;white-space:nowrap">0.0</div>
<div style="position:absolute;left:780.6px;top:377.6px;font-size:29px;line-height:34.8px;color:#212121;font-weight:400;white-space:nowrap">0.0</div>
<div style="position:absolute;left:980.5999999999999px;top:377.6px;font-size:29px;line-height:34.8px;color:#212121;font-weight:400;white-space:nowrap">0.0</div>
<div style="position:absolute;left:1180.6px;top:377.6px;font-size:29px;line-height:34.8px;color:#212121;font-weight:400;white-space:nowrap">0.0</div>
<div style="position:absolute;left:1380.6px;top:377.6px;font-size:29px;line-height:34.8px;color:#212121;font-weight:400;white-space:nowrap">0.0</div>
<div style="position:absolute;left:1580.6px;top:377.6px;font-size:29px;line-height:34.8px;color:#212121;font-weight:400;white-space:nowrap">0.0</div>
<div style="position:absolute;left:0;top:432px;width:1698px;height:72px;border-bottom:2px solid #e0e0e0"></div>
<div style="position:absolute;left:20px;top:449.6px;font-size:29px;line-height:34.8px;color:#212121;font-weight:400;white-space:nowrap">2025/01/14(火)</div>
<div style="position:absolute;left:380.6px;top:449.6px;font-size:29px;line-height:34.8px;color:#212121;font-weight:400;white-space:nowrap">0.0</div>
<div style="position:absolute;left:580.6px;top:449.6px;font-size:29px;line-height:34.8px;color:#212121;font-weight:400;white-space:nowrap">0.0</div>
<div style="position:absolute;left:780.6px;top:449.6px;font-size:29px;line-height:34.8px;color:#212121;font-weight:400;white-space:nowrap">0.0</div>
<div style="position:absolute;left:980.5999999999999px;top:449.6px;font-size:29px;line-height:34.8px;color:#212121;font-weight:400;white-space:nowrap">2,000.0</div>
<div style="position:absolute;left:1180.6px;top:449.6px;font-size:29px;line-height:34.8px;color:#212121;font-weight:400;white-space:nowrap">0.0</div>
<div style="position:absolute;left:1380.6px;top:449.6px;font-size:29px;line-height:34.8px;color:#212121;font-weight:400;white-space:nowrap">0.0</div>
<div style="position:absolute;left:1580.6px;top:449.6px;font-size:29px;line-height:34.8px;color:#212121;font-weight:400;white-space:nowrap">0.0</div>
<div style="position:absolute;left:0;top:504px;width:1698px;height:72px;border-bottom:2px solid #e0e0e0"></div>
<div style="position:absolute;left:20px;top:521.6px;font-size:29px;line-height:34.8px;color:#212121;font-weight:400;white-space:nowrap">2025/01/15(水)</div>
<div style="position:absolute;left:380.6px;top:521.6px;font-size:29px;line-height:34.8px;color:#212121;font-weight:400;white-space:nowrap">0.0</div>
<div style="position:absolute;left:580.6px;top:521.6px;font-size:29px;line-height:34.8px;color:#212121;font-weight:400;white-space:nowrap">0.0</div>
<div style="position:absolute;left:780.6px;top:521.6px;font-size:29px;line-height:34.8px;color:#212121;font-weight:400;white-space:nowrap">0.0</div>
<div style="position:absolute;left:980.5999999999999px;top:521.6px;font-size:29px;line-height:34.8px;color:#212121;font-weight:400;white-space:nowrap">800.0</div>
<div style="position:absolute;left:1180.6px;top:521.6px;font-size:29px;line-height:34.8px;color:#212121;font-weight:400;white-space:nowrap">0.0</div>
<div style="position:absolute;left:1380.6px;top:521.6px;font-size:29px;line-height:34.8px;color:#212121;font-weight:400;white-space:nowrap">0.0</div>
<div style="position:absolute;left:1580.6px;top:521.6px;font-size:29px;line-height:34.8px;color:#212121;font-weight:400;white-space:nowrap">0.0</div>
<div style="position:absolute;left:0;top:576px;width:1698px;height:72px;border-bottom:2px solid #e0e0e0"></div>
<div style="position:absolute;left:20px;top:593.6px;font-size:29px;line-height:34.8px;color:#212121;font-weight:400;white-space:nowrap">2025/01/16(木)</div>
<div style="position:absolute;left:380.6px;top:593.6px;font-size:29px;line-height:34.8px;color:#212121;font-weight:400;white-space:nowrap">1,200.0</div>
<div style="position:absolute;left:580.6px;top:593.6px;font-size:29px;line-height:34.8px;color:#212121;font-weight:400;white-space:nowrap">0.0</div>
<div style="position:absolute;left:780.6px;top:593.6px;font-size:29px;line-height:34.8px;color:#212121;font-weight:400;white-space:nowrap">1,200.0</div>
<div style="position:absolute;left:980.5999999999999px;top:593.6px;font-size:29px;line-height:34.8px;color:#212121;font-weight:400;white-space:nowrap">1,200.0</div>
<div style="position:absolute;left:1180.6px;top:593.6px;font-size:29px;line-height:34.8px;color:#212121;font-weight:400;white-space:nowrap">0.0</div>
<div style="position:absolute;left:1380.6px;top:593.6px;font-size:29px;line-height:34.8px;color:#212121;font-weight:400;white-space:nowrap">0.0</div>
<div style="position:absolute;left:1580.6px;top:593.6px;font-size:29px;line-height:34.8px;color:#212121;font-weight:400;white-space:nowrap">0.0</div>
<div style="position:absolute;left:0;top:648px;width:1698px;height:72px;border-bottom:2px solid #e0e0e0"></div>
<div style="position:absolute;left:20px;top:665.6px;font-size:29px;line-height:34.8px;color:#212121;font-weight:400;white-space:nowrap">2025/01/17(金)</div>
<div style="position:absolute;left:380.6px;top:665.6px;font-size:29px;line-height:34.8px;color:#212121;font-weight:400;white-space:nowrap">0.0</div>
<div style="position:absolute;left:580.6px;top:665.6px;font-size:29px;line-height:34.8px;color:#212121;font-weight:400;white-space:nowrap">0.0</div>
<div style="position:absolute;left:780.6px;top:665.6px;font-size:29px;line-height:34.8px;color:#212121;font-weight:400;white-space:nowrap">0.0</div>
<div style="position:absolute;left:980.5999999999999px;top:665.6px;font-size:29px;line-height:34.8px;color:#212121;font-weight:400;white-space:nowrap">0.0</div>
<div style="position:absolute;left:1180.6px;top:665.6px;font-size:29px;line-height:34.8px;color:#212121;font-weight:400;white-space:nowrap">0.0</div>
<div style="position:absolute;left:1380.6px;top:665.6px;font-size:29px;line-height:34.8px;color:#212121;font-weight:400;white-space:nowrap">0.0</div>
<div style="position:absolute;left:1580.6px;top:665.6px;font-size:29px;line-height:34.8px;color:#212121;font-weight:400;white-space:nowrap">0.0</div>
<div style="position:absolute;left:0;top:720px;width:1698px;height:72px;border-bottom:2px solid #e0e0e0"></div>
<div style="position:absolute;left:20px;top:737.6px;font-size:29px;line-height:34.8px;color:#212121;font-weight:400;white-space:nowrap">2025/01/18(土)</div>
<div style="position:absolute;left:380.6px;top:737.6px;font-size:29px;line-height:34.8px;color:#212121;font-weight:400;white-space:nowrap">2,000.0</div>
<div style="position:absolute;left:580.6px;top:737.6px;font-size:29px;line-height:34.8px;color:#212121;font-weight:400;white-space:nowrap">0.0</div>
<div style="position:absolute;left:780.6px;top:737.6px;font-size:29px;line-height:34.8px;color:#212121;font-weight:400;white-space:nowrap">2,000.0</div>
<div style="position:absolute;left:980.5999999999999px;top:737.6px;font-size:29px;line-height:34.8px;color:#212121;font-weight:400;white-space:nowrap">2,000.0</div>
<div style="position:absolute;left:1180.6px;top:737.6px;font-size:29px;line-height:34.8px;color:#212121;font-weight:400;white-space:nowrap">0.0</div>
<div style="position:absolute;left:1380.6px;top:737.6px;font-size:29px;line-height:34.8px;color:#212121;font-weight:400;white-space:nowrap">0.0</div>
<div style="position:absolute;left:1580.6px;top:737.6px;font-size:29px;line-height:34.8px;color:#212121;font-weight:400;white-space:nowrap">0.0</div>
<div style="position:absolute;left:0;top:792px;width:1698px;height:72px;border-bottom:2px solid #e0e0e0"></div>
<div style="position:absolute;left:20px;top:809.6px;font-size:29px;line-height:34.8px;color:#212121;font-weight:400;white-space:nowrap">2025/01/19(日)</div>
<div style="position:absolute;left:380.6px;top:809.6px;font-size:29px;line-height:34.8px;color:#212121;font-weight:400;white-space:nowrap">800.0</div>
<div style="position:absolute;left:580.6px;top:809.6px;font-size:29px;line-height:34.8px;color:#212121;font-weight:400;white-space:nowrap">0.0</div>
<div style="position:absolute;left:780.6px;top:809.6px;font-size:29px;line-height:34.8px;color:#212121;font-weight:400;white-space:nowrap">800.0</div>
<div style="position:absolute;left:980.5999999999999px;top:809.6px;font-size:29px;line-height:34.8px;color:#212121;font-weight:400;white-space:nowrap">0.0</div>
<div style="position:absolute;left:1180.6px;top:809.6px;font-size:29px;line-height:34.8px;color:#212121;font-weight:400;white-space:nowrap">800.0</div>
<div style="position:absolute;left:1380.6px;top:809.6px;font-size:29px;line-height:34.8px;color:#212121;font-weight:400;white-space:nowrap">0.0</div>
<div style="position:absolute;left:1580.6px;top:809.6px;font-size:29px;line-height:34.8px;color:#212121;font-weight:400;white-space:nowrap">800.0</div>
<div style="position:absolute;left:0;top:864px;width:1698px;height:72px;border-bottom:2px solid #e0e0e0"></div>
<div style="position:absolute;left:20px;top:881.6px;font-size:29px;line-height:34.8px;color:#212121;font-weight:400;white-space:nowrap">2025/01/20(月)</div>
<div style="position:absolute;left:380.6px;top:881.6px;font-size:29px;line-height:34.8px;color:#212121;font-weight:400;white-space:nowrap">1,500.0</div>
<div style="position:absolute;left:580.6px;top:881.6px;font-size:29px;line-height:34.8px;color:#212121;font-weight:400;white-space:nowrap">0.0</div>
<div style="position:absolute;left:780.6px;top:881.6px;font-size:29px;line-height:34.8px;color:#212121;font-weight:400;white-space:nowrap">1,500.0</div>
<div style="position:absolute;left:980.5999999999999px;top:881.6px;font-size:29px;line-height:34.8px;color:#212121;font-weight:400;white-space:nowrap">800.0</div>
<div style="position:absolute;left:1180.6px;top:881.6px;font-size:29px;line-height:34.8px;color:#212121;font-weight:400;white-space:nowrap">0.0</div>
<div style="position:absolute;left:1380.6px;top:881.6px;font-size:29px;line-height:34.8px;color:#212121;font-weight:400;white-space:nowrap">0.0</div>
<div style="position:absolute;left:1580.6px;top:881.6px;font-size:29px;line-height:34.8px;color:#212121;font-weight:400;white-space:nowrap">0.0</div>
<div style="position:absolute;left:0;top:936px;width:1698px;height:72px;border-bottom:2px solid #e0e0e0"></div>
<div style="position:absolute;left:20px;top:953.6px;font-size:29px;line-height:34.8px;color:#212121;font-weight:400;white-space:nowrap">2025/01/21(火)</div>
<div style="position:absolute;left:380.6px;top:953.6px;font-size:29px;line-height:34.8px;color:#212121;font-weight:400;white-space:nowrap">700.0</div>
<div style="position:absolute;left:580.6px;top:953.6px;font-size:29px;line-height:34.8px;color:#212121;font-weight:400;white-space:nowrap">0.0</div>
<div style="position:absolute;left:780.6px;top:953.6px;font-size:29px;line-height:34.8px;color:#212121;font-weight:400;white-space:nowrap">700.0</div>
<div style="position:absolute;left:980.5999999999999px;top:953.6px;font-size:29px;line-height:34.8px;color:#212121;font-weight:400;white-space:nowrap">2,200.0</div>
<div style="position:absolute;left:1180.6px;top:953.6px;font-size:29px;line-height:34.8px;color:#212121;font-weight:400;white-space:nowrap">0.0</div>
<div style="position:absolute;left:1380.6px;top:953.6px;font-size:29px;line-height:34.8px;color:#212121;font-weight:400;white-space:nowrap">0.0</div>
<div style="position:absolute;left:1580.6px;top:953.6px;font-size:29px;line-height:34.8px;color:#212121;font-weight:400;white-space:nowrap">0.0</div>
<div style="position:absolute;left:0;top:1008px;width:1698px;height:72px;border-bottom:2px solid #e0e0e0"></div>
<div style="position:absolute;left:20px;top:1025.6px;font-size:29px;line-height:34.8px;color:#212121;font-weight:400;white-space:nowrap">2025/01/22(水)</div>
<div style="position:absolute;left:380.6px;top:1025.6px;font-size:29px;line-height:34.8px;color:#212121;font-weight:400;white-space:nowrap">800.0</div>
<div style="position:absolute;left:580.6px;top:1025.6px;font-size:29px;line-height:34.8px;color:#212121;font-weight:400;white-space:nowrap">0.0</div>
<div style="position:absolute;left:780.6px;top:1025.6px;font-size:29px;line-height:34.8px;color:#212121;font-weight:400;white-space:nowrap">800.0</div>
<div style="position:absolute;left:980.5999999999999px;top:1025.6px;font-size:29px;line-height:34.8px;color:#212121;font-weight:400;white-space:nowrap">800.0</div>
<div style="position:absolute;left:1180.6px;top:1025.6px;font-size:29px;line-height:34.8px;color:#212121;font-weight:400;white-space:nowrap">0.0</div>
<div style="position:absolute;left:1380.6px;top:1025.6px;font-size:29px;line-height:34.8px;color:#212121;font-weight:400;white-space:nowrap">0.0</div>
<div style="position:absolute;left:1580.6px;top:1025.6px;font-size:29px;line-height:34.8px;color:#212121;font-weight:400;white-space:nowrap">0.0</div>
<div style="position:absolute;left:0;top:1080px;width:1698px;height:72px;border-bottom:2px solid #e0e0e0"></div>
<div style="position:absolute;left:20px;top:1097.6px;font-size:29px;line-height:34.8px;color:#212121;font-weight:400;white-space:nowrap">2025/01/23(木)</div>
<div style="position:absolute;left:380.6px;top:1097.6px;font-size:29px;line-height:34.8px;color:#212121;font-weight:400;white-space:nowrap">0.0</div>
<div style="position:absolute;left:580.6px;top:1097.6px;font-size:29px;line-height:34.8px;color:#212121;font-weight:400;white-space:nowrap">0.0</div>
<div style="position:absolute;left:780.6px;top:1097.6px;font-size:29px;line-height:34.8px;color:#212121;font-weight:400;white-space:nowrap">0.0</div>
<div style="position:absolute;left:980.5999999999999px;top:1097.6px;font-size:29px;line-height:34.8px;color:#212121;font-weight:400;white-space:nowrap">0.0</div>
<div style="position:absolute;left:1180.6px;top:1097.6px;font-size:29px;line-height:34.8px;color:#212121;font-weight:400;white-space:nowrap">0.0</div>
<div style="position:absolute;left:1380.6px;top:1097.6px;font-size:29px;line-height:34.8px;color:#212121;font-weight:400;white-space:nowrap">0.0</div>
<div style="position:absolute;left:1580.6px;top:1097.6px;font-size:29px;line-height:34.8px;color:#212121;font-weight:400;white-space:nowrap">0.0</div>
</div>
<div style="position:absolute;left:224px;top:1863px;width:1698px;height:2px;background:#e0e0e0"></div>
<div style="position:absolute;left:1914px;top:722px;width:8px;height:738px;background:#c1c1c1"></div>
<div style="position:absolute;left:224px;top:1856px;width:374px;height:8px;background:#bdbdbd"></div>
<div style="position:absolute;left:1760px;top:1901.2px;font-size:28px;line-height:33.6px;color:#212121;font-weight:400;white-space:nowrap">総行数: 24</div>
<svg style="position:absolute;left:0;top:0;width:3842px;height:2161px" viewBox="0 0 3842 2161"><rect x="2439.7" y="1525.5" width="57.5" height="117.2" fill="#ddeefb"/><rect x="2503.8" y="1595.8" width="57.5" height="46.9" fill="#ddeefb"/><rect x="2888.1" y="1513.7" width="57.5" height="129.0" fill="#ddeefb"/><rect x="3272.4" y="1595.8" width="57.5" height="46.9" fill="#ddeefb"/><rect x="2567.8" y="1572.4" width="57.5" height="70.3" fill="#64b5f6"/><rect x="2695.9" y="1525.5" width="57.5" height="117.2" fill="#64b5f6"/><rect x="2759.9" y="1595.8" width="57.5" height="46.9" fill="#64b5f6"/><rect x="2824.0" y="1554.8" width="57.5" height="87.9" fill="#64b5f6"/><rect x="2888.1" y="1601.7" width="57.5" height="41.0" fill="#64b5f6"/><rect x="2952.1" y="1595.8" width="57.5" height="46.9" fill="#64b5f6"/><rect x="3080.2" y="1595.8" width="57.5" height="46.9" fill="#64b5f6"/><rect x="3144.2" y="1560.6" width="57.5" height="82.1" fill="#64b5f6"/><rect x="3208.3" y="1595.8" width="57.5" height="46.9" fill="#64b5f6"/><rect x="3336.4" y="1543.1" width="57.5" height="99.6" fill="#64b5f6"/><rect x="3464.5" y="1595.8" width="57.5" height="46.9" fill="#64b5f6"/><rect x="3528.6" y="1572.4" width="57.5" height="70.3" fill="#64b5f6"/><rect x="2055.4" y="1595.8" width="57.5" height="46.9" fill="#0d47a1"/><rect x="2183.5" y="1484.4" width="57.5" height="158.3" fill="#0d47a1"/><rect x="2247.6" y="1554.8" width="57.5" height="87.9" fill="#0d47a1"/><rect x="2311.6" y="1537.2" width="57.5" height="105.5" fill="#0d47a1"/><rect x="2055.4" y="1642.7" width="57.5" height="29.3" fill="#90a4ae"/><rect x="2183.5" y="1642.7" width="57.5" height="58.6" fill="#90a4ae"/><rect x="2247.6" y="1642.7" width="57.5" height="87.9" fill="#90a4ae"/><rect x="2311.6" y="1642.7" width="57.5" height="58.6" fill="#90a4ae"/><rect x="2439.7" y="1642.7" width="57.5" height="117.2" fill="#90a4ae"/><rect x="2503.8" y="1642.7" width="57.5" height="29.3" fill="#90a4ae"/><rect x="2567.8" y="1642.7" width="57.5" height="87.9" fill="#90a4ae"/><rect x="2695.9" y="1642.7" width="57.5" height="117.2" fill="#90a4ae"/><rect x="2824.0" y="1642.7" width="57.5" height="29.3" fill="#90a4ae"/><rect x="2888.1" y="1642.7" width="57.5" height="146.5" fill="#90a4ae"/><rect x="2952.1" y="1642.7" width="57.5" height="29.3" fill="#90a4ae"/><rect x="3080.2" y="1642.7" width="57.5" height="29.3" fill="#90a4ae"/><rect x="3144.2" y="1642.7" width="57.5" height="117.2" fill="#90a4ae"/><rect x="3272.4" y="1642.7" width="57.5" height="29.3" fill="#90a4ae"/><rect x="3336.4" y="1642.7" width="57.5" height="117.2" fill="#90a4ae"/><rect x="3464.5" y="1642.7" width="57.5" height="29.3" fill="#90a4ae"/><rect x="3528.6" y="1642.7" width="57.5" height="87.9" fill="#90a4ae"/><line x1="2051" y1="1642.7" x2="3589" y2="1642.7" stroke="#111" stroke-width="2.5"/><path d="M2083.4,1156.2C2104.8,1156.2,2126.1,1156.2,2147.5,1156.2C2168.8,1156.2,2190.2,1056.6,2211.5,1056.6C2232.9,1056.6,2254.2,1056.6,2275.6,1056.6C2296.9,1056.6,2318.3,1009.7,2339.6,1009.7C2361.0,1009.7,2382.3,1009.7,2403.7,1009.7C2425.0,1009.7,2446.4,1107.3,2467.7,1126.9C2489.1,1146.4,2510.4,1148.4,2531.8,1156.2C2553.1,1164.0,2574.5,1173.8,2595.8,1173.8C2617.2,1173.8,2638.5,1173.8,2659.9,1173.8C2681.2,1173.8,2702.6,1173.8,2723.9,1173.8C2745.3,1173.8,2766.6,1173.8,2788.0,1173.8C2809.3,1173.8,2830.7,1156.2,2852.0,1156.2C2873.4,1156.2,2894.7,1165.0,2916.1,1173.8" fill="none" stroke="#607d8b" stroke-width="4" stroke-dasharray="13 7"/><path d="M3172.3,1173.8C3193.6,1173.8,3215.0,1173.8,3236.3,1173.8C3257.7,1173.8,3279.0,1156.2,3300.4,1156.2C3321.7,1156.2,3343.1,1165.0,3364.4,1173.8" fill="none" stroke="#607d8b" stroke-width="4" stroke-dasharray="13 7"/><path d="M2083.4,1156.2C2104.8,1156.2,2126.1,1156.2,2147.5,1156.2C2168.8,1156.2,2190.2,1056.6,2211.5,1056.6C2232.9,1056.6,2254.2,1056.6,2275.6,1056.6C2296.9,1056.6,2318.3,1009.7,2339.6,1009.7C2361.0,1009.7,2382.3,1009.7,2403.7,1009.7C2425.0,1009.7,2446.4,1107.3,2467.7,1126.9C2489.1,1146.4,2510.4,1148.4,2531.8,1156.2C2553.1,1164.0,2574.5,1173.8,2595.8,1173.8C2617.2,1173.8,2638.5,1173.8,2659.9,1173.8C2681.2,1173.8,2702.6,1173.8,2723.9,1173.8C2745.3,1173.8,2766.6,1144.5,2788.0,1126.9C2809.3,1109.3,2830.7,1068.3,2852.0,1068.3C2873.4,1068.3,2894.7,1173.8,2916.1,1173.8C2937.4,1173.8,2958.8,1156.2,2980.1,1156.2C3001.5,1156.2,3022.8,1156.2,3044.2,1156.2C3065.5,1156.2,3086.9,1138.6,3108.2,1138.6C3129.6,1138.6,3150.9,1173.8,3172.3,1173.8C3193.6,1173.8,3215.0,1126.9,3236.3,1126.9C3257.7,1126.9,3279.0,1148.4,3300.4,1156.2C3321.7,1164.0,3343.1,1173.8,3364.4,1173.8C3385.8,1173.8,3407.1,1173.8,3428.5,1173.8C3449.8,1173.8,3471.2,1156.2,3492.5,1156.2C3513.9,1156.2,3535.2,1165.0,3556.6,1173.8" fill="none" stroke="#607d8b" stroke-width="3.5"/><line x1="2084" y1="704.9" x2="3556" y2="704.9" stroke="#ff5722" stroke-width="2.5" stroke-dasharray="10 10"/><line x1="2084" y1="1173.8" x2="3556" y2="1173.8" stroke="#4caf50" stroke-width="2.5" stroke-dasharray="10 10"/><line x1="2084" y1="1361.3" x2="3556" y2="1361.3" stroke="#26c6da" stroke-width="2.5" stroke-dasharray="10 10"/><line x1="2084" y1="1408.2" x2="3556" y2="1408.2" stroke="#f44336" stroke-width="2.5" stroke-dasharray="10 10"/><line x1="2051.4" y1="703" x2="2051.4" y2="1889" stroke="#111" stroke-width="2.5"/><line x1="2051" y1="1877.2" x2="3590" y2="1877.2" stroke="#111" stroke-width="2.5"/><line x1="2039" y1="1877.2" x2="2051" y2="1877.2" stroke="#111" stroke-width="2.5"/><text x="2035" y="1889.2" text-anchor="end" font-size="24" fill="#212121" font-family="Liberation Sans, sans-serif">-4k</text><line x1="2039" y1="1759.9" x2="2051" y2="1759.9" stroke="#111" stroke-width="2.5"/><text x="2035" y="1771.9" text-anchor="end" font-size="24" fill="#212121" font-family="Liberation Sans, sans-serif">-2k</text><line x1="2039" y1="1642.7" x2="2051" y2="1642.7" stroke="#111" stroke-width="2.5"/><text x="2035" y="1654.7" text-anchor="end" font-size="24" fill="#212121" font-family="Liberation Sans, sans-serif">0</text><line x1="2039" y1="1525.5" x2="2051" y2="1525.5" stroke="#111" stroke-width="2.5"/><text x="2035" y="1537.5" text-anchor="end" font-size="24" fill="#212121" font-family="Liberation Sans, sans-serif">2k</text><line x1="2039" y1="1408.2" x2="2051" y2="1408.2" stroke="#111" stroke-width="2.5"/><text x="2035" y="1420.2" text-anchor="end" font-size="24" fill="#212121" font-family="Liberation Sans, sans-serif">4k</text><line x1="2039" y1="1291.0" x2="2051" y2="1291.0" stroke="#111" stroke-width="2.5"/><text x="2035" y="1303.0" text-anchor="end" font-size="24" fill="#212121" font-family="Liberation Sans, sans-serif">6k</text><line x1="2039" y1="1173.8" x2="2051" y2="1173.8" stroke="#111" stroke-width="2.5"/><text x="2035" y="1185.8" text-anchor="end" font-size="24" fill="#212121" font-family="Liberation Sans, sans-serif">8k</text><line x1="2039" y1="1056.6" x2="2051" y2="1056.6" stroke="#111" stroke-width="2.5"/><text x="2035" y="1068.6" text-anchor="end" font-size="24" fill="#212121" font-family="Liberation Sans, sans-serif">10k</text><line x1="2039" y1="939.3" x2="2051" y2="939.3" stroke="#111" stroke-width="2.5"/><text x="2035" y="951.3" text-anchor="end" font-size="24" fill="#212121" font-family="Liberation Sans, sans-serif">12k</text><line x1="2039" y1="822.1" x2="2051" y2="822.1" stroke="#111" stroke-width="2.5"/><text x="2035" y="834.1" text-anchor="end" font-size="24" fill="#212121" font-family="Liberation Sans, sans-serif">14k</text><line x1="2039" y1="704.9" x2="2051" y2="704.9" stroke="#111" stroke-width="2.5"/><text x="2035" y="716.9" text-anchor="end" font-size="24" fill="#212121" font-family="Liberation Sans, sans-serif">16k</text><line x1="2051.4" y1="1877.2" x2="2051.4" y2="1889.2" stroke="#111" stroke-width="2.5"/><line x1="2115.5" y1="1877.2" x2="2115.5" y2="1889.2" stroke="#111" stroke-width="2.5"/><line x1="2179.5" y1="1877.2" x2="2179.5" y2="1889.2" stroke="#111" stroke-width="2.5"/><line x1="2243.6" y1="1877.2" x2="2243.6" y2="1889.2" stroke="#111" stroke-width="2.5"/><line x1="2307.6" y1="1877.2" x2="2307.6" y2="1889.2" stroke="#111" stroke-width="2.5"/><line x1="2371.7" y1="1877.2" x2="2371.7" y2="1889.2" stroke="#111" stroke-width="2.5"/><line x1="2435.7" y1="1877.2" x2="2435.7" y2="1889.2" stroke="#111" stroke-width="2.5"/><line x1="2499.8" y1="1877.2" x2="2499.8" y2="1889.2" stroke="#111" stroke-width="2.5"/><line x1="2563.8" y1="1877.2" x2="2563.8" y2="1889.2" stroke="#111" stroke-width="2.5"/><line x1="2627.8" y1="1877.2" x2="2627.8" y2="1889.2" stroke="#111" stroke-width="2.5"/><line x1="2691.9" y1="1877.2" x2="2691.9" y2="1889.2" stroke="#111" stroke-width="2.5"/><line x1="2755.9" y1="1877.2" x2="2755.9" y2="1889.2" stroke="#111" stroke-width="2.5"/><line x1="2820.0" y1="1877.2" x2="2820.0" y2="1889.2" stroke="#111" stroke-width="2.5"/><line x1="2884.1" y1="1877.2" x2="2884.1" y2="1889.2" stroke="#111" stroke-width="2.5"/><line x1="2948.1" y1="1877.2" x2="2948.1" y2="1889.2" stroke="#111" stroke-width="2.5"/><line x1="3012.2" y1="1877.2" x2="3012.2" y2="1889.2" stroke="#111" stroke-width="2.5"/><line x1="3076.2" y1="1877.2" x2="3076.2" y2="1889.2" stroke="#111" stroke-width="2.5"/><line x1="3140.2" y1="1877.2" x2="3140.2" y2="1889.2" stroke="#111" stroke-width="2.5"/><line x1="3204.3" y1="1877.2" x2="3204.3" y2="1889.2" stroke="#111" stroke-width="2.5"/><line x1="3268.4" y1="1877.2" x2="3268.4" y2="1889.2" stroke="#111" stroke-width="2.5"/><line x1="3332.4" y1="1877.2" x2="3332.4" y2="1889.2" stroke="#111" stroke-width="2.5"/><line x1="3396.4" y1="1877.2" x2="3396.4" y2="1889.2" stroke="#111" stroke-width="2.5"/><line x1="3460.5" y1="1877.2" x2="3460.5" y2="1889.2" stroke="#111" stroke-width="2.5"/><line x1="3524.6" y1="1877.2" x2="3524.6" y2="1889.2" stroke="#111" stroke-width="2.5"/><line x1="3588.6" y1="1877.2" x2="3588.6" y2="1889.2" stroke="#111" stroke-width="2.5"/><text x="2083.4" y="1937" text-anchor="middle" font-size="26" fill="#212121" font-family="Liberation Sans, sans-serif">1/8(水)</text><text x="2467.7" y="1937" text-anchor="middle" font-size="26" fill="#212121" font-family="Liberation Sans, sans-serif">1/14(火)</text><text x="2852.0" y="1937" text-anchor="middle" font-size="26" fill="#212121" font-family="Liberation Sans, sans-serif">1/20(月)</text><text x="3236.3" y="1937" text-anchor="middle" font-size="26" fill="#212121" font-family="Liberation Sans, sans-serif">1/26(日)</text></svg>
<div style="position:absolute;left:2134px;top:601.2px;font-size:28px;line-height:33.6px;color:#212121;font-weight:400;white-space:nowrap">製造数累計</div>
<div style="position:absolute;left:2306px;top:601.2px;font-size:28px;line-height:33.6px;color:#212121;font-weight:400;white-space:nowrap">20,500.0</div>
<div style="position:absolute;left:2511px;top:601.2px;font-size:28px;line-height:33.6px;color:#212121;font-weight:400;white-space:nowrap">販売数累計</div>
<div style="position:absolute;left:2683px;top:601.2px;font-size:28px;line-height:33.6px;color:#212121;font-weight:400;white-space:nowrap">20,500.0</div>
<div style="position:absolute;left:2888px;top:601.2px;font-size:28px;line-height:33.6px;color:#212121;font-weight:400;white-space:nowrap">消費数累計</div>
<div style="position:absolute;left:3060px;top:601.2px;font-size:28px;line-height:33.6px;color:#212121;font-weight:400;white-space:nowrap">0.0</div>
<div style="position:absolute;left:3195px;top:601.2px;font-size:28px;line-height:33.6px;color:#212121;font-weight:400;white-space:nowrap">調整数累計</div>
<div style="position:absolute;left:3367px;top:601.2px;font-size:28px;line-height:33.6px;color:#212121;font-weight:400;white-space:nowrap">0.0</div>
</div></body></html>
